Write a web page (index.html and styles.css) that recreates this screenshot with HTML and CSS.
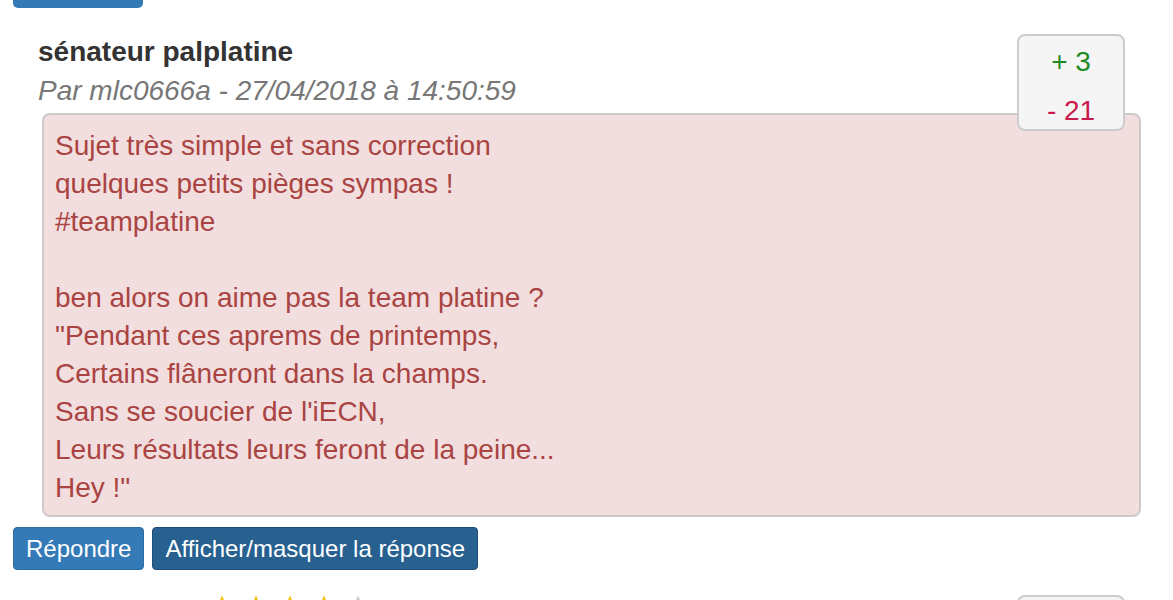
FILE: index.html
```html
<!DOCTYPE html>
<html lang="fr">
<head>
<meta charset="utf-8">
<title>Commentaires</title>
<link rel="stylesheet" href="styles.css">
</head>
<body>
<div class="btn-stub"></div>

<div class="comment">
  <h4 class="comment-title">sénateur palplatine</h4>
  <div class="comment-meta">Par mlc0666a - 27/04/2018 à 14:50:59</div>
  <div class="comment-body">Sujet très simple et sans correction<br>quelques petits pièges sympas !<br>#teamplatine<br><br>ben alors on aime pas la team platine ?<br>"Pendant ces aprems de printemps,<br>Certains flâneront dans la champs.<br>Sans se soucier de l'iECN,<br>Leurs résultats leurs feront de la peine...<br>Hey !"</div>
  <div class="vote">
    <span class="vote-up">+ 3</span>
    <span class="vote-down">- 21</span>
  </div>
  <div class="actions">
    <button class="btn btn-primary">Répondre</button>
    <button class="btn btn-dark">Afficher/masquer la réponse</button>
  </div>
</div>

<div class="comment next">
  <div class="stars">
    <svg class="star on" viewBox="0 0 24 24"><path d="M12 1l3.1 7.2 7.8.7-5.9 5.2 1.8 7.7L12 17.8 5.2 21.8 7 14.1 1.1 8.9l7.8-.7z"/></svg>
    <svg class="star on" viewBox="0 0 24 24"><path d="M12 1l3.1 7.2 7.8.7-5.9 5.2 1.8 7.7L12 17.8 5.2 21.8 7 14.1 1.1 8.9l7.8-.7z"/></svg>
    <svg class="star on" viewBox="0 0 24 24"><path d="M12 1l3.1 7.2 7.8.7-5.9 5.2 1.8 7.7L12 17.8 5.2 21.8 7 14.1 1.1 8.9l7.8-.7z"/></svg>
    <svg class="star on" viewBox="0 0 24 24"><path d="M12 1l3.1 7.2 7.8.7-5.9 5.2 1.8 7.7L12 17.8 5.2 21.8 7 14.1 1.1 8.9l7.8-.7z"/></svg>
    <svg class="star" viewBox="0 0 24 24"><path d="M12 1l3.1 7.2 7.8.7-5.9 5.2 1.8 7.7L12 17.8 5.2 21.8 7 14.1 1.1 8.9l7.8-.7z"/></svg>
  </div>
  <div class="vote vote-next"></div>
</div>
</body>
</html>
```

FILE: styles.css
```css
html, body {
  margin: 0;
  padding: 0;
  background: #fff;
  font-family: "Liberation Sans", Arial, Helvetica, sans-serif;
  color: #333;
  overflow: hidden;
}

.btn-stub {
  margin-left: 13px;
  width: 130px;
  height: 8px;
  background: #337ab7;
  border-radius: 0 0 5px 5px;
}

.comment {
  position: relative;
  margin: 0 32px 0 13px;
  padding-top: 25px;
}

.comment-title {
  margin: 0 0 0 25px;
  font-size: 28px;
  font-weight: bold;
  line-height: 38px;
  color: #333;
}

.comment-meta {
  margin: 1px 0 0 25px;
  font-size: 28px;
  font-style: italic;
  line-height: 38px;
  color: #777;
}

.comment-body {
  margin: 3px 0 0 29px;
  padding: 12px 12px 8px 11px;
  background: #f2dede;
  border: 2px solid #cfcaca;
  border-radius: 8px;
  color: #a94442;
  font-size: 28px;
  line-height: 38px;
}

.vote {
  position: absolute;
  top: 26px;
  right: 16px;
  width: 104px;
  height: 93px;
  background: #f5f5f5;
  border: 2px solid #ccc;
  border-radius: 8px;
  display: flex;
  flex-direction: column;
  align-items: center;
  font-size: 28px;
  line-height: 38px;
}

.vote-up {
  margin-top: 7px;
  color: #1f8a1f;
}

.vote-down {
  margin-top: 11px;
  color: #c9184a;
}

.actions {
  display: flex;
  gap: 8px;
  margin-top: 10px;
}

.btn {
  height: 43px;
  padding: 0 12px;
  font-family: inherit;
  font-size: 24px;
  color: #fff;
  border-radius: 4px;
  cursor: pointer;
}

.btn-primary {
  background: #337ab7;
  border: 1px solid #2e6da4;
}

.btn-dark {
  background: #286090;
  border: 1px solid #204d74;
}

.comment.next {
  margin-top: 0;
  padding-top: 24px;
  height: 40px;
}

.stars {
  display: flex;
  gap: 2px;
  padding-left: 193px;
}

.star {
  width: 32px;
  height: 32px;
  fill: #ccc;
}

.star.on {
  fill: #f0c419;
}

.vote-next {
  top: 25px;
}
```
